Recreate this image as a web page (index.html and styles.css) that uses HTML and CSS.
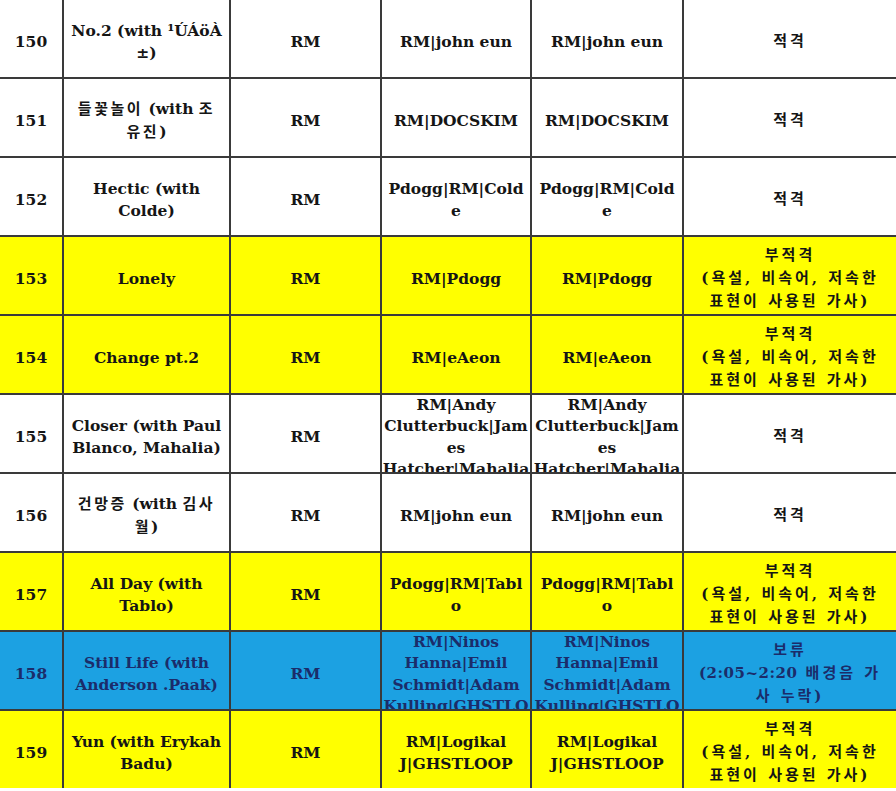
FILE: index.html
```html
<!DOCTYPE html>
<html lang="ko">
<head>
<meta charset="utf-8">
<title>Song review table</title>
<link rel="stylesheet" href="styles.css">
</head>
<body>
<div class="sheet">
  <div class="c">150</div><div class="c">No.2 (with ¹ÚÁöÀ<br>±)</div><div class="c">RM</div><div class="c">RM|john eun</div><div class="c">RM|john eun</div><div class="c ko">적격</div>

  <div class="c">151</div><div class="c"><span class="t"><span class="k">들꽃놀이</span> (with <span class="k">조</span><br><span class="k">유진</span>)</span></div><div class="c">RM</div><div class="c">RM|DOCSKIM</div><div class="c">RM|DOCSKIM</div><div class="c ko">적격</div>

  <div class="c">152</div><div class="c">Hectic (with<br>Colde)</div><div class="c">RM</div><div class="c">Pdogg|RM|Cold<br>e</div><div class="c">Pdogg|RM|Cold<br>e</div><div class="c ko">적격</div>

  <div class="c y">153</div><div class="c y">Lonely</div><div class="c y">RM</div><div class="c y">RM|Pdogg</div><div class="c y">RM|Pdogg</div><div class="c y ko">부적격<br>(욕설, 비속어, 저속한<br>표현이 사용된 가사)</div>

  <div class="c y">154</div><div class="c y">Change pt.2</div><div class="c y">RM</div><div class="c y">RM|eAeon</div><div class="c y">RM|eAeon</div><div class="c y ko">부적격<br>(욕설, 비속어, 저속한<br>표현이 사용된 가사)</div>

  <div class="c">155</div><div class="c">Closer (with Paul<br>Blanco, Mahalia)</div><div class="c">RM</div><div class="c">RM|Andy<br>Clutterbuck|Jam<br>es<br>Hatcher|Mahalia</div><div class="c">RM|Andy<br>Clutterbuck|Jam<br>es<br>Hatcher|Mahalia</div><div class="c ko">적격</div>

  <div class="c">156</div><div class="c"><span class="t"><span class="k">건망증</span> (with <span class="k">김사</span><br><span class="k">월</span>)</span></div><div class="c">RM</div><div class="c">RM|john eun</div><div class="c">RM|john eun</div><div class="c ko">적격</div>

  <div class="c y">157</div><div class="c y">All Day (with<br>Tablo)</div><div class="c y">RM</div><div class="c y">Pdogg|RM|Tabl<br>o</div><div class="c y">Pdogg|RM|Tabl<br>o</div><div class="c y ko">부적격<br>(욕설, 비속어, 저속한<br>표현이 사용된 가사)</div>

  <div class="c b">158</div><div class="c b">Still Life (with<br>Anderson .Paak)</div><div class="c b">RM</div><div class="c b">RM|Ninos<br>Hanna|Emil<br>Schmidt|Adam<br>Kulling|GHSTLO</div><div class="c b">RM|Ninos<br>Hanna|Emil<br>Schmidt|Adam<br>Kulling|GHSTLO</div><div class="c b ko"><span class="t">보류<br><span class="n">(2:05~2:20</span> 배경음 가<br>사 누락)</span></div>

  <div class="c y">159</div><div class="c y">Yun (with Erykah<br>Badu)</div><div class="c y">RM</div><div class="c y">RM|Logikal<br>J|GHSTLOOP</div><div class="c y">RM|Logikal<br>J|GHSTLOOP</div><div class="c y ko">부적격<br>(욕설, 비속어, 저속한<br>표현이 사용된 가사)</div>
</div>
</body>
</html>
```
FILE: styles.css
```css
html, body {
  margin: 0;
  padding: 0;
  background: #ffffff;
}

.sheet {
  display: grid;
  grid-template-columns: 62px 165px 149px 148px 150px 1fr;
  grid-auto-rows: 77px;
  gap: 2px;
  background: #3a3a3a;
  width: 896px;
  font-family: "DejaVu Serif", "Noto Sans CJK KR", serif;
  font-size: 15.5px;
  font-weight: bold;
  line-height: 21.5px;
  color: #151515;
}

.c {
  background: #ffffff;
  display: flex;
  align-items: center;
  justify-content: center;
  text-align: center;
  white-space: nowrap;
  overflow: hidden;
  padding-top: 6px;
  box-sizing: border-box;
}

.t {
  display: block;
}

.y {
  background: #ffff00;
}

.b {
  background: #1ca1e2;
  color: #1b2c6a;
}

.ko {
  font-size: 15px;
  letter-spacing: 3px;
  line-height: 23px;
}

.k {
  font-size: 15px;
  letter-spacing: 2.5px;
}

.n {
  letter-spacing: 0.5px;
}
```
